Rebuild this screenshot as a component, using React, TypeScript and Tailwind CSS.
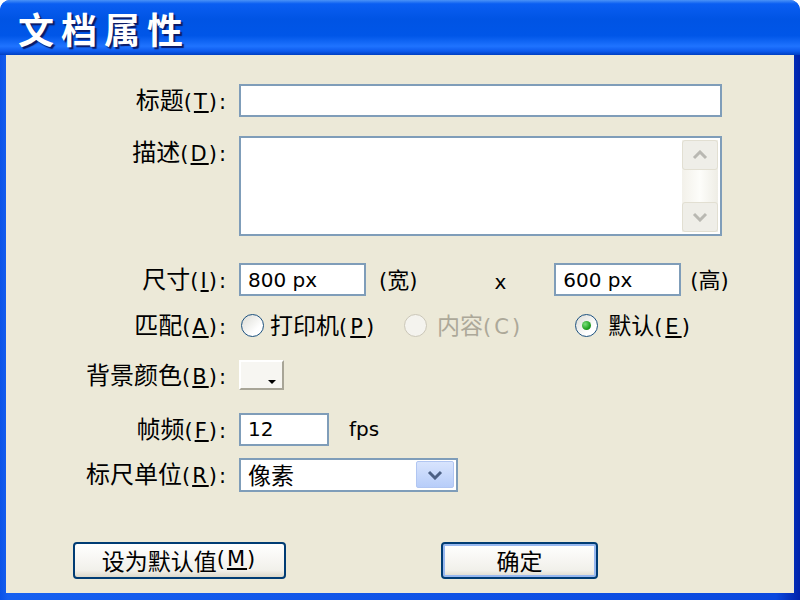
const cjk = "font-['Noto_Sans_CJK_SC',sans-serif]";
const lat = "font-['DejaVu_Sans','Noto_Sans_CJK_SC',sans-serif]";

function Label({ text, k }: { text: string; k: string }) {
  return (
    <div className="w-[233px] shrink-0 pr-[11px] text-right text-black whitespace-nowrap">
      <span className={`${cjk} text-[24px] leading-[30px]`}>{text}</span>
      <span className={`${lat} text-[21px] leading-[30px] tracking-[2px]`}>
        (<span className="underline underline-offset-2">{k}</span>):
      </span>
    </div>
  );
}

function TextBox({ value, w }: { value?: string; w: string }) {
  return (
    <div className={`${w} h-[33px] border-2 border-[#7F9DB9] bg-white flex items-center pl-[7px]`}>
      <span className={`${lat} text-[20px] text-black`}>{value}</span>
    </div>
  );
}

function Radio({ checked, disabled }: { checked?: boolean; disabled?: boolean }) {
  return (
    <div
      className={`w-[23px] h-[23px] rounded-full border-[1.5px] flex items-center justify-center ${
        disabled ? "border-[#CBC7B8] bg-[#F4F3EE]" : "border-[#1C5180] bg-[linear-gradient(135deg,#dcdcd5_0%,#ffffff_70%)]"
      }`}
    >
      {checked && <div className="w-[9px] h-[9px] rounded-full bg-[radial-gradient(circle_at_35%_35%,#7be07b_0%,#21a121_60%,#137013_100%)]" />}
    </div>
  );
}

function Chevron({ up, color }: { up?: boolean; color: string }) {
  return (
    <svg width="16" height="10" viewBox="0 0 16 10">
      <path d={up ? "M2 8 L8 2 L14 8" : "M2 2 L8 8 L14 2"} fill="none" stroke={color} strokeWidth="3" />
    </svg>
  );
}

export default function App() {
  return (
    <div className="w-[800px] h-[600px] flex flex-col bg-[#0a48de] rounded-t-[10px] overflow-hidden">
      <div className="h-[55px] shrink-0 flex items-center pl-[18px] bg-[linear-gradient(180deg,#4a92f7_0%,#0a5ef2_7%,#0054e4_35%,#0056e8_65%,#1f73ff_84%,#0d5bee_93%,#003fc2_100%)]">
        <span className={`${cjk} text-[36px] font-bold tracking-[7px] text-white [text-shadow:2px_2px_1px_#0a1a66]`}>文档属性</span>
      </div>
      <div className="flex-1 flex pl-[6px] pr-[6px] pb-[7px] bg-[linear-gradient(90deg,#0a52e8_0%,#1660f0_1%,#0a48de_97%,#0022aa_100%)]">
        <div className="flex-1 bg-[#ECE9D8] flex flex-col">
          {/* 标题 */}
          <div className="flex items-center mt-[29px]">
            <Label text="标题" k="T" />
            <TextBox w="w-[483px]" />
          </div>
          {/* 描述 */}
          <div className="flex items-start mt-[19px]">
            <Label text="描述" k="D" />
            <div className="w-[483px] h-[100px] border-2 border-[#7F9DB9] bg-white flex justify-end p-[2px]">
              <div className="w-[36px] flex flex-col bg-[linear-gradient(90deg,#f3f1ea,#fdfdfa_50%,#eeede5)]">
                <div className="h-[30px] rounded-[3px] border border-[#E2DFD2] bg-[#EFEEE8] flex items-center justify-center">
                  <Chevron up color="#B9B8B2" />
                </div>
                <div className="flex-1" />
                <div className="h-[30px] rounded-[3px] border border-[#E2DFD2] bg-[#EFEEE8] flex items-center justify-center">
                  <Chevron color="#B9B8B2" />
                </div>
              </div>
            </div>
          </div>
          {/* 尺寸 */}
          <div className="flex items-center mt-[26px]">
            <Label text="尺寸" k="I" />
            <TextBox w="w-[127px]" value="800 px" />
            <span className={`ml-[13px] ${lat} text-[21px]`}>
              (<span className={`${cjk} text-[22px]`}>宽</span>)
            </span>
            <span className={`ml-[77px] ${lat} text-[20px] mt-[4px]`}>x</span>
            <div className="ml-[48px]">
              <TextBox w="w-[127px]" value="600 px" />
            </div>
            <span className={`ml-[9px] ${lat} text-[21px]`}>
              (<span className={`${cjk} text-[22px]`}>高</span>)
            </span>
          </div>
          {/* 匹配 */}
          <div className="flex items-center mt-[13px] h-[30px]">
            <Label text="匹配" k="A" />
            <div className="ml-[2px]">
              <Radio />
            </div>
            <span className="ml-[6px] text-black whitespace-nowrap">
              <span className={`${cjk} text-[23px]`}>打印机</span>
              <span className={`${lat} text-[21px] tracking-[3px]`}>(<span className="underline underline-offset-2">P</span>)</span>
            </span>
            <div className="ml-[27px]">
              <Radio disabled />
            </div>
            <span className="ml-[10px] text-[#ACA899] whitespace-nowrap">
              <span className={`${cjk} text-[23px]`}>内容</span>
              <span className={`${lat} text-[21px] tracking-[3px]`}>(C)</span>
            </span>
            <div className="ml-[52px]">
              <Radio checked />
            </div>
            <span className="ml-[10px] text-black whitespace-nowrap">
              <span className={`${cjk} text-[23px]`}>默认</span>
              <span className={`${lat} text-[21px] tracking-[3px]`}>(<span className="underline underline-offset-2">E</span>)</span>
            </span>
          </div>
          {/* 背景颜色 */}
          <div className="flex items-center mt-[18px]">
            <Label text="背景颜色" k="B" />
            <div className="w-[45px] h-[30px] border-2 border-t-white border-l-white border-b-[#A8A597] border-r-[#A8A597] bg-[#F7F6F2] relative">
              <div className="absolute right-[6px] bottom-[4px] w-0 h-0 border-l-[4px] border-r-[4px] border-t-[4px] border-l-transparent border-r-transparent border-t-black" />
            </div>
          </div>
          {/* 帧频 */}
          <div className="flex items-center mt-[21px]">
            <Label text="帧频" k="F" />
            <TextBox w="w-[90px]" value="12" />
            <span className={`ml-[20px] ${lat} text-[20px]`}>fps</span>
          </div>
          {/* 标尺单位 */}
          <div className="flex items-center mt-[12px]">
            <Label text="标尺单位" k="R" />
            <div className="w-[219px] h-[34px] border-2 border-[#7F9DB9] bg-white flex items-center pl-[7px] pr-[2px]">
              <span className={`${cjk} text-[23px] flex-1`}>像素</span>
              <div className="w-[38px] h-[27px] rounded-[2px] bg-[linear-gradient(180deg,#d8e4fd,#b7cdf9)] border border-[#B1C6F2] flex items-center justify-center">
                <Chevron color="#4D6185" />
              </div>
            </div>
          </div>
          {/* buttons */}
          <div className="flex items-center mt-[50px]">
            <button className="ml-[67px] w-[213px] h-[37px] rounded-[4px] border-2 border-[#003C74] bg-[linear-gradient(180deg,#ffffff,#f1f0ea_80%,#dcd8ca)] flex items-center justify-center text-black whitespace-nowrap">
              <span className={`${cjk} text-[23px]`}>设为默认值</span>
              <span className={`${lat} text-[21px] tracking-[2px]`}>(<span className="underline underline-offset-2">M</span>)</span>
            </button>
            <button className="ml-[155px] w-[157px] h-[37px] rounded-[4px] border-2 border-[#003C74] shadow-[inset_0_0_0_2px_#97b8f0] bg-[linear-gradient(180deg,#ffffff,#f1f0ea_80%,#dcd8ca)] flex items-center justify-center text-black">
              <span className={`${cjk} text-[23px]`}>确定</span>
            </button>
          </div>
        </div>
      </div>
    </div>
  );
}
